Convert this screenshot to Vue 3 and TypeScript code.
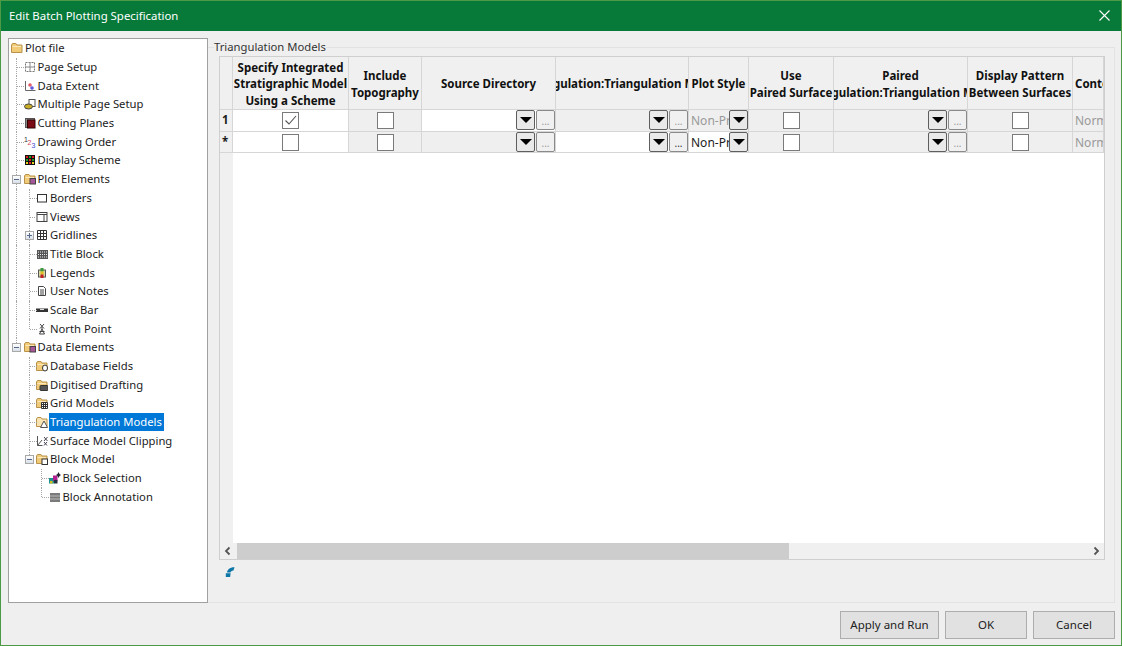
<script setup lang="ts">
type Guide = 'v' | 't' | 'e' | 'plus' | 'minus' | 'minusEnd' | 'b'

interface TreeRow {
  label: string
  icon: string
  guides: Guide[]
  selected?: boolean
}

interface GridCell {
  kind: 'check' | 'browse' | 'style' | 'text'
  white?: boolean
  checked?: boolean
  dim?: boolean
}

const folder = '<path d="M.5 3v7.500h10.500V3H6L5 1.500H1.500z" fill="#f2cb78" stroke="#b8924a"/><path d="M1.500 4.500h8.500" stroke="#fbe7b8"/>'
const badge = (fill: string) => folder + `<rect x="6" y="5.500" width="5.500" height="5.500" fill="${fill}" stroke="#444"/>`

const icons: Record<string, string> = {
  folder,
  page: '<rect x="1.500" y="1.500" width="9" height="9" fill="#fff" stroke="#777" stroke-dasharray="2 1"/><path d="M6 1v10M1 6h10" stroke="#888"/>',
  extent: '<path d="M1.500 1v9.500h10" fill="none" stroke="#666"/><circle cx="6" cy="5" r="1.800" fill="#e05a6a"/><circle cx="8" cy="8" r="1.800" fill="#5a5ae0"/>',
  multi: '<rect x="5" y="1.500" width="6" height="7" fill="#fff" stroke="#555"/><ellipse cx="4.500" cy="8.500" rx="4" ry="2.500" fill="#c9ac26" stroke="#444"/>',
  cutting: '<rect x="1.500" y="1.500" width="9" height="9" fill="#8a8a8a" stroke="#555"/><rect x="3.500" y="3" width="7.500" height="8" fill="#7a0a14" stroke="#300"/>',
  order: '<text x="0" y="6" font-size="7" font-family="Liberation Sans" fill="#333">1</text><text x="3.500" y="9" font-size="7" font-family="Liberation Sans" fill="#d0405a">2</text><text x="7.500" y="12" font-size="7" font-family="Liberation Sans" fill="#3a4ad0">3</text>',
  scheme: '<rect x="1" y="1" width="10" height="10" fill="#111"/><path d="M2 2h2v2H2zM8 2h2v2H8zM5 5h2v2H5z" fill="#e02020"/><path d="M5 2h2v2H5zM2 5h2v2H2zM8 5h2v2H8z" fill="#20a020"/><path d="M2 8h2v2H2zM8 8h2v2H8z" fill="#e8d020"/><path d="M5 8h2v2H5z" fill="#e02020"/>',
  plotFolder: badge('#a8569a'),
  dataFolder: badge('#a8569a'),
  borders: '<rect x="1.500" y="2.500" width="9" height="7.500" fill="#fff" stroke="#333"/>',
  views: '<rect x="1" y="1.500" width="10" height="9" fill="#fff" stroke="#444"/><path d="M1 3.500h10M8 3.500v7" stroke="#444" fill="none"/>',
  gridlines: '<path d="M1.500 1.500h9v9h-9zM4.500 1.500v9M7.500 1.500v9M1.500 4.500h9M1.500 7.500h9" fill="#fff" stroke="#333"/>',
  title: '<rect x="1" y="2" width="11" height="9" fill="#555"/><path d="M2 4h9M2 6.500h9M2 9h9" stroke="#eee" stroke-dasharray="1 1"/>',
  legends: '<rect x="2.500" y="3" width="7" height="7" fill="#d8d8a0" stroke="#555"/><rect x="4.500" y="1" width="3" height="3.500" fill="#3a9a3a"/><rect x="4.500" y="4.500" width="3" height="3" fill="#e0c020"/><rect x="4.500" y="7.500" width="3" height="3.500" fill="#c02020"/>',
  notes: '<path d="M2.500 1.500h5l2 2v7h-7z" fill="#fff" stroke="#444"/><path d="M4 5h4M4 7h4M4 9h4" stroke="#444"/>',
  scale: '<rect x="0" y="4.500" width="12" height="3.500" fill="#333"/><path d="M4 5.500h4" stroke="#ddd"/>',
  north: '<path d="M4 1l4 4.500M8 1L4 5.500M6 4v2M3.500 11L6 6l2.500 5zM3.500 8.500h5" fill="none" stroke="#444"/>',
  dbFolder: folder + '<ellipse cx="9" cy="8" rx="2.500" ry="3" fill="#fff" stroke="#333"/>',
  draftFolder: folder + '<rect x="4" y="6.500" width="8" height="5" rx="1" fill="#555" stroke="#333"/>',
  gridFolder: folder + '<path d="M5.500 5.500h6v6h-6zM7.500 5.500v6M9.500 5.500v6M5.500 7.500h6M5.500 9.500h6" fill="#fff" stroke="#333"/>',
  triFolder: folder.replace('#f2cb78', '#f8e2b0') + '<path d="M8 5l3.500 6.500h-7z" fill="#fff" stroke="#555"/>',
  clipping: '<path d="M1.500 1v9.500h5M1.500 10.500L6 5" fill="none" stroke="#555"/><path d="M8 2l3.500 4M11.500 2L8 6M8 7l3 3.500M11 7l-3 3.500" stroke="#445" fill="none"/>',
  blockFolder: folder + '<rect x="6" y="6" width="5.500" height="5.500" fill="#fff" stroke="#333"/>',
  selection: '<rect x="0" y="6" width="5" height="5.500" fill="#209090"/><rect x="4" y="3.500" width="4.500" height="5.500" fill="#b02090"/><rect x="5" y="8" width="3.500" height="3.500" fill="#203040"/><path d="M9.500 0l1 2 1.500 1-1.500 1-1 2-1-2L7 3l1.500-1z" fill="#223"/><rect x="1" y="9" width="2.500" height="2.500" fill="#d0c020"/>',
  annotation: '<path d="M2 2v9M4 2v9M6 2v9M8 2v9M10 2v9" stroke="#222" stroke-width="1.200"/><path d="M1 5h10M1 8h10" stroke="#fff" stroke-width=".5"/>',
}

const treeRows: TreeRow[] = [
  { label: 'Plot file', icon: 'folder', guides: [] },
  { label: 'Page Setup', icon: 'page', guides: ['t'] },
  { label: 'Data Extent', icon: 'extent', guides: ['t'] },
  { label: 'Multiple Page Setup', icon: 'multi', guides: ['t'] },
  { label: 'Cutting Planes', icon: 'cutting', guides: ['t'] },
  { label: 'Drawing Order', icon: 'order', guides: ['t'] },
  { label: 'Display Scheme', icon: 'scheme', guides: ['t'] },
  { label: 'Plot Elements', icon: 'plotFolder', guides: ['minus'] },
  { label: 'Borders', icon: 'borders', guides: ['v', 't'] },
  { label: 'Views', icon: 'views', guides: ['v', 't'] },
  { label: 'Gridlines', icon: 'gridlines', guides: ['v', 'plus'] },
  { label: 'Title Block', icon: 'title', guides: ['v', 't'] },
  { label: 'Legends', icon: 'legends', guides: ['v', 't'] },
  { label: 'User Notes', icon: 'notes', guides: ['v', 't'] },
  { label: 'Scale Bar', icon: 'scale', guides: ['v', 't'] },
  { label: 'North Point', icon: 'north', guides: ['v', 'e'] },
  { label: 'Data Elements', icon: 'dataFolder', guides: ['minusEnd'] },
  { label: 'Database Fields', icon: 'dbFolder', guides: ['b', 't'] },
  { label: 'Digitised Drafting', icon: 'draftFolder', guides: ['b', 't'] },
  { label: 'Grid Models', icon: 'gridFolder', guides: ['b', 't'] },
  { label: 'Triangulation Models', icon: 'triFolder', guides: ['b', 't'], selected: true },
  { label: 'Surface Model Clipping', icon: 'clipping', guides: ['b', 't'] },
  { label: 'Block Model', icon: 'blockFolder', guides: ['b', 'minusEnd'] },
  { label: 'Block Selection', icon: 'selection', guides: ['b', 'b', 't'] },
  { label: 'Block Annotation', icon: 'annotation', guides: ['b', 'b', 'e'] },
]

const headers: string[][] = [
  ['Specify Integrated', 'Stratigraphic Model', 'Using a Scheme'],
  ['Include', 'Topography'],
  ['Source Directory'],
  ['Triangulation:Triangulation Model'],
  ['Plot Style'],
  ['Use', 'Paired Surface'],
  ['Paired', 'Triangulation:Triangulation Model'],
  ['Display Pattern', 'Between Surfaces'],
]

const gridRows: { head: string; cells: GridCell[] }[] = [
  {
    head: '1',
    cells: [
      { kind: 'check', white: true, checked: true },
      { kind: 'check' },
      { kind: 'browse', white: true, dim: true },
      { kind: 'browse', dim: true },
      { kind: 'style', dim: true },
      { kind: 'check' },
      { kind: 'browse', dim: true },
      { kind: 'check' },
      { kind: 'text', dim: true },
    ],
  },
  {
    head: '*',
    cells: [
      { kind: 'check', white: true },
      { kind: 'check' },
      { kind: 'browse', dim: true },
      { kind: 'browse', white: true },
      { kind: 'style', white: true },
      { kind: 'check' },
      { kind: 'browse', dim: true },
      { kind: 'check' },
      { kind: 'text', dim: true },
    ],
  },
]
</script>

<template>
  <div class="window">
    <div class="titlebar">
      <span>Edit Batch Plotting Specification</span>
      <svg class="close" width="11" height="11" viewBox="0 0 11 11">
        <path d="M.5.5l10 10M10.500.5l-10 10" stroke="#fff" stroke-width="1.100" />
      </svg>
    </div>

    <div class="main">
      <div class="tree">
        <div v-for="row in treeRows" :key="row.label" class="tree-row">
          <span v-for="(g, i) in row.guides" :key="i" class="guide" :class="g">
            <i v-if="g === 'plus' || g === 'minus' || g === 'minusEnd'" class="expander">
              <b></b><u v-if="g === 'plus'"></u>
            </i>
          </span>
          <svg class="tree-icon" width="12" height="12" viewBox="0 0 12 12" v-html="icons[row.icon]"></svg>
          <span class="tree-label" :class="{ selected: row.selected }">{{ row.label }}</span>
        </div>
      </div>

      <fieldset class="group">
        <legend>Triangulation Models</legend>
        <div class="grid">
          <div class="table">
            <div class="head corner"></div>
            <div v-for="(h, i) in headers" :key="i" class="head">
              <span v-for="line in h" :key="line">{{ line }}</span>
            </div>
            <div class="head"><span class="left">Contour</span></div>

            <template v-for="row in gridRows" :key="row.head">
              <div class="row-head">{{ row.head }}</div>
              <div v-for="(cell, i) in row.cells" :key="i" class="cell" :class="[cell.kind, { white: cell.white, dim: cell.dim }]">
                <span v-if="cell.kind === 'check'" class="box">
                  <svg v-if="cell.checked" width="13" height="11" viewBox="0 0 13 11">
                    <path d="M1.500 5.500l3.500 3.500 7-8" fill="none" stroke="#555" stroke-width="1.100" />
                  </svg>
                </span>
                <template v-else-if="cell.kind === 'browse'">
                  <span class="drop"><i></i></span>
                  <span class="more">...</span>
                </template>
                <template v-else-if="cell.kind === 'style'">
                  <span class="value">Non-Profile</span>
                  <span class="drop over"><i></i></span>
                </template>
                <span v-else class="value">Normal</span>
              </div>
            </template>

            <div class="filler-head"></div>
            <div class="filler"></div>
          </div>
          <div class="scrollbar">
            <svg class="arrow" width="16" height="16" viewBox="0 0 16 16">
              <path d="M9.500 4.500L6 8l3.500 3.500" fill="none" stroke="#555" stroke-width="1.800" />
            </svg>
            <div class="thumb"></div>
            <svg class="arrow end" width="16" height="16" viewBox="0 0 16 16">
              <path d="M6.500 4.500L10 8l-3.500 3.500" fill="none" stroke="#555" stroke-width="1.800" />
            </svg>
          </div>
        </div>
        <svg class="status-icon" width="10" height="10" viewBox="0 0 10 10">
          <path d="M2 5.500C2.500 3 4 .3 9.500.3L8.500 3.500C6.500 3.500 6 4.500 5.500 5.500z" fill="#0f76a8" />
          <path d="M.8 6.200h4.800L5.100 10H.8z" fill="#0f76a8" />
        </svg>
      </fieldset>
    </div>

    <div class="footer">
      <button class="apply">Apply and Run</button>
      <button>OK</button>
      <button>Cancel</button>
    </div>
  </div>
</template>

<style scoped>
.window {
  width: 1122px;
  height: 646px;
  box-sizing: border-box;
  border: 1px solid #4c9a45;
  background: #efefef;
  display: flex;
  flex-direction: column;
  font-family: "Noto Sans", "Liberation Sans", sans-serif;
  font-size: 11.25px;
  color: #1c1c1c;
  overflow: hidden;
}

.titlebar {
  height: 30px;
  box-sizing: border-box;
  flex: none;
  background: #077a3a;
  color: #fff;
  font-size: 11.4px;
  display: flex;
  align-items: center;
  justify-content: space-between;
  padding: 0 11px 2px 8px;
}

.main {
  height: 572px;
  flex: none;
  display: flex;
  padding: 7px 6px 0 7px;
  box-sizing: border-box;
}

.tree {
  width: 200px;
  height: 565px;
  flex: none;
  box-sizing: border-box;
  border: 1px solid #a0a0a0;
  background: #fff;
  padding: 0 0 0 1px;
}

.tree-row {
  height: 18.69px;
  display: flex;
  align-items: center;
  white-space: nowrap;
}

.guide {
  width: 12.5px;
  height: 100%;
  flex: none;
  position: relative;
}

.guide::before,
.guide::after {
  content: "";
  position: absolute;
}

.v::before,
.t::before,
.plus::before,
.minus::before {
  left: 6px;
  top: 0;
  bottom: 0;
  border-left: 1px dotted #a6a6a6;
}

.e::before,
.minusEnd::before {
  left: 6px;
  top: 0;
  height: 50%;
  border-left: 1px dotted #a6a6a6;
}

.t::after,
.e::after {
  left: 7px;
  top: 50%;
  width: 7px;
  border-top: 1px dotted #a6a6a6;
}

.expander {
  position: absolute;
  left: 2px;
  top: 5px;
  width: 7px;
  height: 7px;
  border: 1px solid #a8a8a8;
  background: linear-gradient(#fff, #d8dfe8);
  z-index: 1;
}

.expander b {
  position: absolute;
  left: 1px;
  top: 3px;
  width: 5px;
  height: 1px;
  background: #56688a;
}

.expander u {
  position: absolute;
  left: 3px;
  top: 1px;
  width: 1px;
  height: 5px;
  background: #56688a;
}

.tree-icon {
  flex: none;
  margin: 0 1px 0 1px;
}

.tree-label {
  padding: 0 2px 1px 1px;
  line-height: 17px;
}

.tree-label.selected {
  background: #0078d7;
  color: #fff;
}

.group {
  flex: 1;
  min-width: 0;
  height: 565px;
  box-sizing: border-box;
  margin: 0;
  padding: 0 9px 0 11px;
  border: 1px solid #e2e2e2;
  border-left: none;
  display: flex;
  flex-direction: column;
}

.group legend {
  margin-left: -5px;
  padding: 0;
  line-height: 18px;
  color: #333;
}

.grid {
  width: 886px;
  height: 504px;
  flex: none;
  box-sizing: border-box;
  border: 1px solid #cfcfcf;
  background: #fff;
  display: flex;
  flex-direction: column;
}

.table {
  flex: 1;
  min-height: 0;
  display: grid;
  grid-template-columns: 13px 116px 73px 134px 133px 60px 85px 134px 105px 31px;
  grid-template-rows: 53px 22px 21px 1fr;
}

.head {
  background: #f0f0f0;
  border-right: 1px solid #d6d6d6;
  border-bottom: 1px solid #d6d6d6;
  box-sizing: border-box;
  padding-top: 3px;
  display: flex;
  flex-direction: column;
  align-items: center;
  justify-content: center;
  overflow: hidden;
  white-space: nowrap;
  font-size: 11.5px;
  font-weight: 700;
  line-height: 16.5px;
  color: #111;
}

.head .left {
  align-self: flex-start;
  padding-left: 2px;
}

.row-head {
  background: #f0f0f0;
  border-right: 1px solid #d6d6d6;
  border-bottom: 1px solid #d6d6d6;
  font-weight: 700;
  font-size: 11.5px;
  padding-left: 2px;
  line-height: 20px;
}

.cell {
  position: relative;
  background: #efefef;
  border-right: 1px solid #d6d6d6;
  border-bottom: 1px solid #d6d6d6;
  box-sizing: border-box;
  display: flex;
  align-items: center;
  justify-content: center;
  overflow: hidden;
  white-space: nowrap;
}

.cell.style,
.cell.text {
  justify-content: flex-start;
}

.cell.white {
  background: #fff;
}

.box {
  width: 17px;
  height: 17px;
  box-sizing: border-box;
  border: 1px solid #7a7a7a;
  background: #fff;
  display: flex;
  align-items: center;
  justify-content: center;
}

.drop {
  position: absolute;
  right: 20px;
  top: 0;
  width: 19px;
  height: 20px;
  box-sizing: border-box;
  border: 1px solid #5e5e5e;
  border-radius: 2px;
  background: #e9e9e9;
  display: flex;
  align-items: center;
  justify-content: center;
}

.drop i {
  width: 0;
  height: 0;
  border-left: 6px solid transparent;
  border-right: 6px solid transparent;
  border-top: 6px solid #000;
}

.drop.over {
  right: 0;
}

.more {
  position: absolute;
  right: 0;
  top: 0;
  width: 19px;
  height: 20px;
  box-sizing: border-box;
  border: 1px solid #8a8a8a;
  border-radius: 2px;
  background: #f0f0f0;
  font-size: 10px;
  line-height: 20px;
  text-align: center;
  color: #333;
}

.dim .more {
  color: #999;
}

.value {
  flex: none;
  padding-left: 2px;
  font-size: 12px;
}

.dim .value {
  color: #999;
}

.filler-head {
  background: #f0f0f0;
}

.filler {
  grid-column: 2 / -1;
  background: #fff;
}

.scrollbar {
  height: 16px;
  flex: none;
  background: #f0f0f0;
  display: flex;
  align-items: center;
}

.arrow {
  flex: none;
}

.arrow.end {
  margin-left: auto;
}

.thumb {
  width: 552px;
  height: 16px;
  margin-left: 1px;
  background: #cdcdcd;
}

.status-icon {
  margin: 7px 0 0 6px;
  flex: none;
}

.footer {
  flex: 1;
  display: flex;
  justify-content: flex-end;
  gap: 6px;
  padding: 8px 6px 0 0;
}

.footer button {
  width: 82px;
  height: 28px;
  box-sizing: border-box;
  border: 1px solid #adadad;
  background: #e1e1e1;
  font: inherit;
  font-size: 11.5px;
  color: #222;
  padding: 0 0 2px;
}

.footer .apply {
  width: 99px;
}
</style>

<style>
html,
body {
  margin: 0;
  overflow: hidden;
}
</style>
